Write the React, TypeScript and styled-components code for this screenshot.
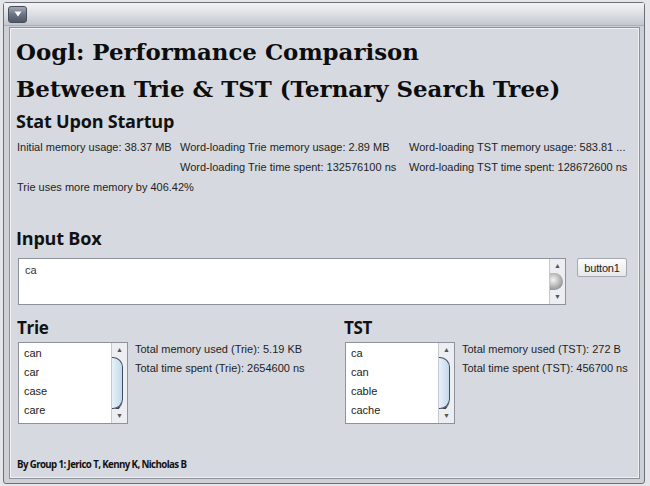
import React from "react";
import styled, { createGlobalStyle } from "styled-components";

const GlobalStyle = createGlobalStyle`
  html, body {
    margin: 0;
    padding: 0;
    background: #e4e5e8;
  }
  body {
    font-family: "Liberation Sans", Arial, sans-serif;
  }
`;

const trieWords = ["can", "car", "case", "care"];
const tstWords = ["ca", "can", "cable", "cache"];

const Scrollbar: React.FC<{ big?: boolean }> = ({ big }) => (
  <Track>
    <Arrow>▲</Arrow>
    <ThumbArea>{big ? <BlueThumb /> : <GreyThumb />}</ThumbArea>
    <Arrow>▼</Arrow>
  </Track>
);

const ResultList: React.FC<{ words: string[] }> = ({ words }) => (
  <ListBox>
    <ListItems>
      {words.map((w) => (
        <ListItem key={w}>{w}</ListItem>
      ))}
    </ListItems>
    <Scrollbar big />
  </ListBox>
);

const App: React.FC = () => {
  return (
    <>
      <GlobalStyle />
      <Window>
        <TitleBar>
          <MenuButton>
            <svg width="8" height="6" viewBox="0 0 8 6">
              <path d="M0.5 0.5 L7.5 0.5 L4 5.5 Z" fill="#fff" />
            </svg>
          </MenuButton>
        </TitleBar>
        <Frame>
          <Panel>
            <Title>
              Oogl: Performance Comparison
              <br />
              Between Trie &amp; TST (Ternary Search Tree)
            </Title>
            <Heading>Stat Upon Startup</Heading>
            <StatGrid>
              <Stat>Initial memory usage: 38.37 MB</Stat>
              <Stat>Word-loading Trie memory usage: 2.89 MB</Stat>
              <Stat>Word-loading TST memory usage: 583.81 ...</Stat>
              <Stat />
              <Stat>Word-loading Trie time spent: 132576100 ns</Stat>
              <Stat>Word-loading TST time spent: 128672600 ns</Stat>
              <Stat>Trie uses more memory by 406.42%</Stat>
            </StatGrid>

            <Heading $top={29}>Input Box</Heading>
            <InputRow>
              <TextBox>
                <TextContent>ca</TextContent>
                <Scrollbar />
              </TextBox>
              <PlainButton>button1</PlainButton>
            </InputRow>

            <Columns>
              <Column>
                <SubHeading>Trie</SubHeading>
                <ResultRow>
                  <ResultList words={trieWords} />
                  <Info>
                    <Stat>Total memory used (Trie): 5.19 KB</Stat>
                    <Stat>Total time spent (Trie): 2654600 ns</Stat>
                  </Info>
                </ResultRow>
              </Column>
              <Column>
                <SubHeading>TST</SubHeading>
                <ResultRow>
                  <ResultList words={tstWords} />
                  <Info>
                    <Stat>Total memory used (TST): 272 B</Stat>
                    <Stat>Total time spent (TST): 456700 ns</Stat>
                  </Info>
                </ResultRow>
              </Column>
            </Columns>

            <Footer>By Group 1: Jerico T, Kenny K, Nicholas B</Footer>
          </Panel>
        </Frame>
      </Window>
    </>
  );
};

const Window = styled.div`
  box-sizing: border-box;
  margin: 2px 0 0 3px;
  width: 642px;
  height: 482px;
  border: 1px solid #6b6f77;
  border-radius: 3px;
  background: #cdd0d7;
  display: flex;
  flex-direction: column;
`;

const TitleBar = styled.div`
  height: 22px;
  flex: none;
  display: flex;
  align-items: center;
  padding-left: 4px;
  background: linear-gradient(#f2f3f5, #dadde2 55%, #c3c7cf);
  border-bottom: 1px solid #a9adb5;
`;

const MenuButton = styled.div`
  width: 17px;
  height: 15px;
  border-radius: 3px;
  border: 1px solid #474d59;
  background: linear-gradient(#a3aab6, #6b7383 50%, #525a6a);
  display: flex;
  align-items: center;
  justify-content: center;
`;

const Frame = styled.div`
  flex: 1;
  display: flex;
  padding: 1px 4px 4px 5px;
`;

const Panel = styled.div`
  flex: 1;
  display: flex;
  flex-direction: column;
  padding: 0 6px 0 7px;
  border: 1px solid #8c9099;
  box-shadow: inset 0 0 0 1px #f1f2f4;
  background: #d6d9e0;
  color: #111;
`;

const Title = styled.h1`
  margin: 5px 0 0 -1px;
  font-family: "DejaVu Serif", serif;
  font-weight: 700;
  font-size: 22.9px;
  line-height: 37px;
  letter-spacing: 0;
  color: #0d0d0d;
`;

const Heading = styled.h2<{ $top?: number }>`
  margin: ${(p) => p.$top ?? 2}px 0 0 -1px;
  font-family: "Open Sans", sans-serif;
  font-weight: 700;
  font-size: 18px;
  line-height: 24px;
  letter-spacing: -0.2px;
  color: #111;
`;

const StatGrid = styled.div`
  display: grid;
  grid-template-columns: 163px 229px 1fr;
  grid-auto-rows: 20px;
  align-items: center;
  margin-top: 4px;
`;

const Stat = styled.div`
  font-size: 11px;
  color: #1e1e1e;
  white-space: nowrap;
  line-height: 19px;
`;

const InputRow = styled.div`
  display: flex;
  align-items: flex-start;
  gap: 11px;
  margin-top: 8px;
  padding-left: 1px;
`;

const TextBox = styled.div`
  width: 548px;
  height: 47px;
  display: flex;
  box-sizing: border-box;
  border: 1px solid #8d929c;
  background: #fff;
`;

const TextContent = styled.div`
  flex: 1;
  padding: 5px 6px;
  font-size: 11px;
  color: #333;
`;

const PlainButton = styled.button`
  height: 19px;
  width: 50px;
  padding: 0;
  border: 1px solid #a5a9b1;
  border-radius: 2px;
  background: linear-gradient(#fbfbfc, #e7e8eb);
  font-family: "Liberation Sans", Arial, sans-serif;
  font-size: 11px;
  letter-spacing: -0.2px;
  color: #222;
`;

const Track = styled.div`
  width: 15px;
  flex: none;
  display: flex;
  flex-direction: column;
  border-left: 1px solid #c5c8ce;
  background: #eceef1;
`;

const Arrow = styled.div`
  height: 14px;
  flex: none;
  font-size: 7px;
  line-height: 14px;
  text-align: center;
  color: #555;
`;

const ThumbArea = styled.div`
  flex: 1;
  display: flex;
  flex-direction: column;
  justify-content: center;
  overflow: hidden;
`;

const GreyThumb = styled.div`
  width: 13px;
  height: 18px;
  border-radius: 0 9px 9px 0;
  background: radial-gradient(circle at 25% 40%, #f4f4f4, #a0a0a0 65%, #6f6f6f);
`;

const BlueThumb = styled.div`
  width: 11px;
  height: 100%;
  box-sizing: border-box;
  border: 1px solid #3f4d63;
  border-left: none;
  border-radius: 0 10px 10px 0;
  background: linear-gradient(90deg, #e8f1f9, #c4d9ec);
  box-shadow: 0 3px 0 -1px #3a3a3a;
`;

const Columns = styled.div`
  display: grid;
  grid-template-columns: 327px 1fr;
  margin-top: 12px;
`;

const Column = styled.div`
  display: flex;
  flex-direction: column;
`;

const SubHeading = styled.h3`
  margin: 0;
  font-family: "Open Sans", sans-serif;
  font-weight: 700;
  font-size: 17px;
  line-height: 22px;
  letter-spacing: -0.3px;
  color: #111;
`;

const ResultRow = styled.div`
  display: flex;
  gap: 7px;
  margin-top: 3px;
  padding-left: 1px;
`;

const ListBox = styled.div`
  width: 110px;
  height: 82px;
  box-sizing: border-box;
  display: flex;
  border: 1px solid #8d929c;
  background: #fff;
`;

const ListItems = styled.div`
  flex: 1;
  padding: 1px 0 0 5px;
`;

const ListItem = styled.div`
  font-size: 11px;
  line-height: 19px;
  color: #222;
`;

const Info = styled.div`
  display: flex;
  flex-direction: column;
  margin-top: -2px;
`;

const Footer = styled.div`
  margin-top: auto;
  margin-bottom: 7px;
  font-family: "Open Sans", sans-serif;
  font-weight: 700;
  font-size: 9.7px;
  letter-spacing: -0.6px;
  color: #111;
`;

export default App;
